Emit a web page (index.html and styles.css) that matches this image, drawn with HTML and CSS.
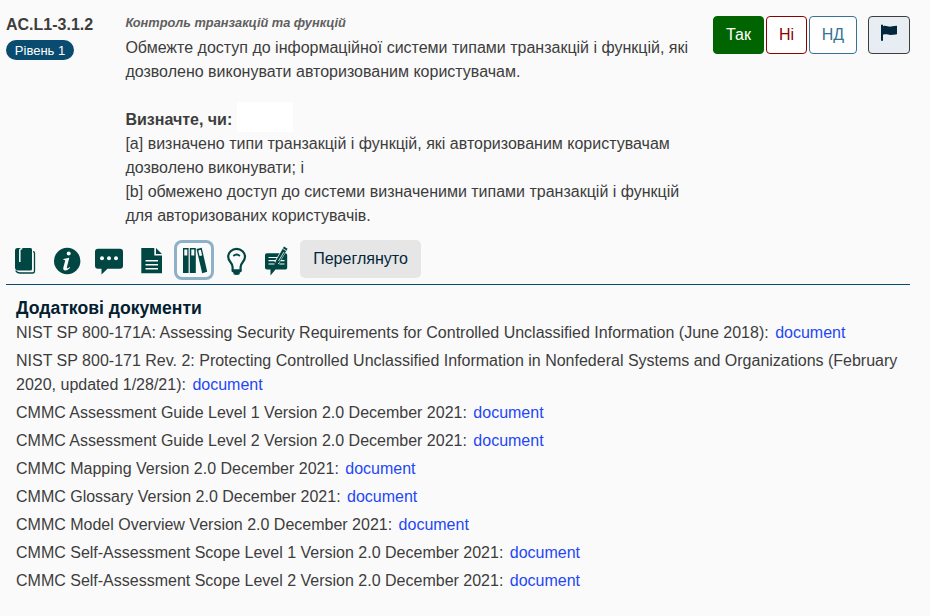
FILE: index.html
```
<!DOCTYPE html>
<html lang="uk">
<head>
<meta charset="utf-8">
<title>AC.L1-3.1.2</title>
<link rel="stylesheet" href="styles.css">
</head>
<body>
<main class="page">
  <section class="question">
    <div class="ident">
      <div class="code">AC.L1-3.1.2</div>
      <span class="level">Рівень 1</span>
    </div>
    <div class="body">
      <div class="category">Контроль транзакцій та функцій</div>
      <p>Обмежте доступ до інформаційної системи типами транзакцій і функцій, які<br>дозволено виконувати авторизованим користувачам.</p>
      <p class="assess"><b>Визначте, чи:</b><span class="blank"></span><br>[a] визначено типи транзакцій і функцій, які авторизованим користувачам<br>дозволено виконувати; і<br>[b] обмежено доступ до системи визначеними типами транзакцій і функцій<br>для авторизованих користувачів.</p>
    </div>
    <div class="answers">
      <button class="btn yes">Так</button>
      <button class="btn no">Ні</button>
      <button class="btn na">НД</button>
      <button class="btn flag" aria-label="Позначити"><svg width="18" height="18" viewBox="880 24 18 18"><path d="M881 24.800h2v16h-2zM883 26.200c3-1.300 5 .9 8 .4 2-.3 4-.9 6-.9v8.600c-2 .1-4 .8-6.500 .7-2.500-.1-4.500-1.300-7.500-.2z"/></svg></button>
    </div>
  </section>

  <nav class="tools">
    <a class="tool"><svg viewBox="5 240 40 40"><path d="M17.500 248H30.500q1.500 0 1.500 1.500v19.500q0 1.500-1.500 1.500H18.500Q15 270.500 15 267.500V250.500q0-2.500 2.500-2.500z"/><path class="ribbon" d="M22.300 248.800q-2.500-.3-2.500 1.700v11.500"/><path class="line" d="M33 251.600q1.500 0 1.500 1.500v18q0 1.900-1.900 1.900H20q-3 0-4.300-2.500"/></svg></a>
    <a class="tool"><svg viewBox="47 240 40 40"><circle cx="67.200" cy="261" r="13.200"/><circle class="white" cx="68.700" cy="253.400" r="2"/><path class="white" d="M63.500 259l5.800-1.200-2.400 9.400c-.3 1.500 1 1.300 2.800-.3l.5.600c-1.600 2-3.200 2.900-4.900 2.900-1.900 0-2.400-1.200-1.900-3.200l1.700-6.200c.2-.9-.4-1.100-1.700-1z"/></svg></a>
    <a class="tool"><svg viewBox="89 240 40 40"><path d="M98 248.700h22q3 0 3 3v14q0 3-3 3h-12.500l-6 5.800v-5.800H98q-3 0-3-3v-14q0-3 3-3z"/><g class="white"><circle cx="102" cy="258.200" r="2"/><circle cx="109" cy="258.200" r="2"/><circle cx="116" cy="258.200" r="2"/></g></svg></a>
    <a class="tool"><svg viewBox="131 240 40 40"><path d="M141.300 248h13v7.500h7.700V273.300h-20.700zM156 248l6 6h-6z"/><path class="white" d="M145.500 260h12.500v1.500h-12.500zM145.500 264h12.500v1.500h-12.500zM145.500 268h12.500v1.500h-12.500z"/></svg></a>
    <a class="tool active"><svg viewBox="174 240 40 40"><path d="M183 248h5.600v25H183zM189.800 248h6v25h-6z"/><path d="M196.500 249l5.200-1.200 5.500 24-5 1.500z"/><path class="white" d="M184.300 249.500h3v6h-3zM191.300 249.500h3v6h-3zM198.300 250.400l2.500-.6 1.300 5.600-2.500.7z"/></svg></a>
    <a class="tool"><svg viewBox="216 240 40 40"><path class="bulb" d="M232.600 270.500v-3.500c0-4.500-4.400-5-4.400-10.200a8.400 7.900 0 0 1 16.800 0c0 5.200-4.400 5.700-4.400 10.200v3.500z"/><path d="M232 269.500h9.300v2.300l-1.600.9v1.500q-3.200 1.600-6.200 0v-1.500l-1.500-.9z"/><path class="glint" d="M233.300 256q3.300-3 6.600 0"/></svg></a>
    <a class="tool"><svg viewBox="258 240 40 40"><path d="M267 253.200h18.500q1.700 0 1.700 1.700v12.800q0 1.700-1.700 1.700h-10l-5 6v-6H267q-2 0-2-1.700v-12.800q0-1.700 2-1.700z"/><path class="write" d="M268.500 257.500h9M268.500 260.700h7.500M268.500 264h6M279.500 264h5M281 260.700h3.500"/><path class="halo" d="M284 250.500l-7.500 12.500"/><path d="M284 246.500l3.600 2.200-8.600 14-4 3.500.9-5.400z"/><path class="clip" d="M283 248.700l3.200 2"/><path class="clip" d="M284 252l-5.500 9"/></svg></a>
    <button class="reviewed">Переглянуто</button>
  </nav>

  <section class="docs">
    <h2>Додаткові документи</h2>
    <div class="doc">NIST SP 800-171A: Assessing Security Requirements for Controlled Unclassified Information (June 2018): <a>document</a></div>
    <div class="doc">NIST SP 800-171 Rev. 2: Protecting Controlled Unclassified Information in Nonfederal Systems and Organizations (February 2020, updated 1/28/21): <a>document</a></div>
    <div class="doc">CMMC Assessment Guide Level 1 Version 2.0 December 2021: <a>document</a></div>
    <div class="doc">CMMC Assessment Guide Level 2 Version 2.0 December 2021: <a>document</a></div>
    <div class="doc">CMMC Mapping Version 2.0 December 2021: <a>document</a></div>
    <div class="doc">CMMC Glossary Version 2.0 December 2021: <a>document</a></div>
    <div class="doc">CMMC Model Overview Version 2.0 December 2021: <a>document</a></div>
    <div class="doc">CMMC Self-Assessment Scope Level 1 Version 2.0 December 2021: <a>document</a></div>
    <div class="doc">CMMC Self-Assessment Scope Level 2 Version 2.0 December 2021: <a>document</a></div>
  </section>
</main>
</body>
</html>
```
FILE: styles.css
```
* { box-sizing: border-box; }
body {
  margin: 0;
  background: #fafafa;
  color: #3d3d3d;
  font: 16px/24px "Liberation Sans", Arial, sans-serif;
}
.page { padding: 12px 20px 0 6px; }
.question {
  display: grid;
  grid-template-columns: 119.4px 587.6px 1fr;
  height: 228px;
}
.code { font-weight: bold; line-height: 26px; height: 24px; }
.level {
  display: block;
  width: 68px;
  height: 20px;
  margin-top: 4px;
  border-radius: 10px;
  background: #0a4c70;
  color: #fff;
  font-size: 13px;
  line-height: 21px;
  text-align: center;
}
.category {
  font-size: 12.8px;
  font-weight: bold;
  font-style: italic;
  line-height: 22px;
  height: 24px;
  color: #5f5f5f;
}
.body { white-space: nowrap; }
.body p { margin: 0; }
.body .assess { margin-top: 24px; }
.blank {
  display: inline-block;
  width: 56px;
  height: 30px;
  margin: -10px 0 -2px 5px;
  background: #fff;
  vertical-align: middle;
}
.answers { display: flex; gap: 2px; padding-top: 4px; }
.btn {
  height: 38px;
  padding: 0;
  border: 1px solid;
  border-radius: 4px;
  background: #fff;
  font: 16px/24px "Liberation Sans", Arial, sans-serif;
}
.yes { width: 51px; background: #006400; border-color: #006400; color: #fff; }
.no { width: 41px; color: #8b0000; }
.na { width: 48px; color: #367394; }
.flag {
  width: 42px;
  margin-left: 9px;
  border-color: #3d3d3d;
  background: #e7edf2;
}
.flag svg { display: block; margin: -5px auto 0; fill: #02263b; }
.tools {
  display: grid;
  grid-template-columns: 42px 42px 42px 43px 42px 42px 42px 121px;
  height: 45px;
  border-bottom: 1px solid #0a4c70;
}
.tool { width: 40px; height: 40px; margin-left: -1px; fill: #004643; }
.tool svg { display: block; width: 40px; height: 40px; }
.active { border-radius: 8px; box-shadow: inset 0 0 0 3px #8fb1c8; }
.white { fill: #fafafa; }
.line { fill: none; stroke: #004643; stroke-width: 1.3; }
.ribbon { fill: none; stroke: #fafafa; stroke-width: 1.5; }
.bulb { fill: none; stroke: #004643; stroke-width: 2.2; }
.glint { fill: none; stroke: #004643; stroke-width: 1.7; }
.write { fill: none; stroke: #fafafa; stroke-width: 1.2; }
.halo { stroke: #fafafa; stroke-width: 5; }
.clip { stroke: #fafafa; stroke-width: .8; }
.reviewed {
  width: 121px;
  height: 38px;
  margin-left: -1px;
  padding: 0;
  border: 0;
  border-radius: 5px;
  background: #e6e6e6;
  color: #02263b;
  font: 16px/24px "Liberation Sans", Arial, sans-serif;
}
.docs { padding: 11px 10px 0; }
h2 {
  margin: 0;
  height: 25px;
  color: #02202f;
  font-size: 17.6px;
  line-height: 24px;
}
.doc { margin-bottom: 4px; }
.doc a { color: #1f47f5; margin-left: 2px; }
```
